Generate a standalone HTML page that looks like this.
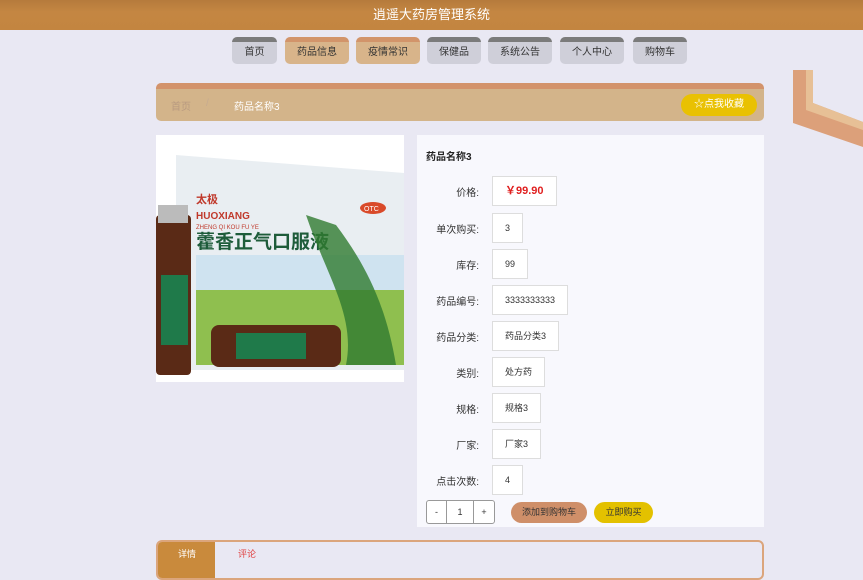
<!DOCTYPE html>
<html><head><meta charset="utf-8"><style>
*{margin:0;padding:0;box-sizing:border-box}
body{width:863px;height:564px;overflow:hidden;background:#e9e8f3;font-family:"Liberation Sans","Noto Sans CJK SC",sans-serif;position:relative;font-size:10px;color:#333}
.hdr{position:absolute;left:0;top:0;width:863px;height:30px;background:linear-gradient(#b57a3c,#c48642 40%,#c38540);color:#fff;text-align:center;line-height:30px;font-size:13px}
.nav{position:absolute;top:37px;height:27px;border-radius:5px;background:#cfcfd9;border-top:5px solid #7b7b7b;text-align:center;line-height:22px;font-size:10px;color:#333}
.nav.a{background:#d8b48a;border-top-color:#d2946a}
.bc{position:absolute;left:156px;top:83px;width:608px;height:38px;background:#d3b48a;border-top:6px solid #d3936b;border-radius:5px}
.bc span{position:absolute;top:9px;font-size:10px}
.fav{position:absolute;left:681px;top:94px;width:76px;height:22px;border-radius:11px;background:#e9c102;color:#fff;font-size:10px;text-align:center;line-height:22px}
.img{position:absolute;left:156px;top:135px;width:248px;height:247px;background:#fff;overflow:hidden}
.det{position:absolute;left:417px;top:135px;width:347px;height:392px;background:#f8f8fd}
.lbl{position:absolute;width:62px;text-align:right;left:417px;font-size:10px;color:#333}
.box{position:absolute;left:492px;height:30px;border:1px solid #ddd;background:#fff;font-size:9px;line-height:28px;padding:0 12px;color:#333}
.btn{position:absolute;top:502px;height:21px;border-radius:11px;text-align:center;line-height:21px;font-size:9px;color:#333}
.tabs{position:absolute;left:156px;top:540px;width:608px;height:40px;border:2px solid #dba57c;border-radius:6px;background:#e9e8f3;overflow:hidden}
</style></head><body>
<div class="hdr">逍遥大药房管理系统</div>
<div class="nav" style="left:232px;width:45px">首页</div>
<div class="nav a" style="left:285px;width:64px">药品信息</div>
<div class="nav a" style="left:356px;width:64px">疫情常识</div>
<div class="nav" style="left:427px;width:54px">保健品</div>
<div class="nav" style="left:488px;width:64px">系统公告</div>
<div class="nav" style="left:560px;width:64px">个人中心</div>
<div class="nav" style="left:633px;width:54px">购物车</div>
<svg style="position:absolute;left:780px;top:60px" width="83" height="100"><polygon points="13,10 33,10 33,43 83,62 83,87 13,63" fill="#dca07a"/><polygon points="26,10 33,10 33,43 83,62 83,70 26,50" fill="#e7c096"/></svg>
<div class="bc"><span style="left:15px;color:#b89a80">首页</span><span style="left:50px;color:#c6ab90">/</span><span style="left:78px;color:#fff">药品名称3</span></div>
<div class="fav">☆点我收藏</div>
<div class="img"><svg width="248" height="247">
<rect width="248" height="247" fill="#fff"/>
<polygon points="20,20 248,38 248,235 20,235" fill="#e9eef2"/>
<text x="40" y="68" font-size="11" fill="#c0392b" font-weight="bold">太极</text>
<text x="40" y="84" font-size="10" fill="#c0392b" font-weight="bold">HUOXIANG</text>
<text x="40" y="94" font-size="6" fill="#c0392b">ZHENG QI KOU FU YE</text>
<ellipse cx="217" cy="73" rx="13" ry="6" fill="#d94a2a"/><text x="208" y="76" font-size="7" fill="#fff">OTC</text>
<text x="40" y="113" font-size="19" fill="#1e5c3a" font-weight="bold">藿香正气口服液</text>
<rect x="40" y="120" width="208" height="110" fill="#8fbf4f"/><rect x="40" y="120" width="208" height="35" fill="#cfe3f0"/>
<path d="M150,80 C170,140 200,180 190,230 L240,230 C230,170 210,130 180,90Z" fill="#2f7a2f" opacity=".8"/>
<rect x="0" y="80" width="35" height="160" rx="4" fill="#5a2a16"/><rect x="5" y="140" width="27" height="70" fill="#1f7a4a"/>
<rect x="2" y="70" width="30" height="18" fill="#bbb"/>
<rect x="55" y="190" width="130" height="42" rx="8" fill="#5a2a16"/><rect x="80" y="198" width="70" height="26" fill="#1f7a4a"/>
</svg></div>
<div class="det"></div>
<div style="position:absolute;left:426px;top:148px;font-size:10px;font-weight:bold;color:#222">药品名称3</div>
<div class="lbl" style="top:184px">价格:</div><div class="box" style="top:176px;color:#e02020;font-size:11px;font-weight:bold">￥99.90</div>
<div class="lbl" style="top:221px">单次购买:</div><div class="box" style="top:213px">3</div>
<div class="lbl" style="top:257px">库存:</div><div class="box" style="top:249px">99</div>
<div class="lbl" style="top:293px">药品编号:</div><div class="box" style="top:285px">3333333333</div>
<div class="lbl" style="top:329px">药品分类:</div><div class="box" style="top:321px">药品分类3</div>
<div class="lbl" style="top:365px">类别:</div><div class="box" style="top:357px">处方药</div>
<div class="lbl" style="top:401px">规格:</div><div class="box" style="top:393px">规格3</div>
<div class="lbl" style="top:437px">厂家:</div><div class="box" style="top:429px">厂家3</div>
<div class="lbl" style="top:473px">点击次数:</div><div class="box" style="top:465px">4</div>
<div style="position:absolute;left:426px;top:500px;width:69px;height:24px;border:1px solid #999;border-radius:3px;background:#fff;display:flex;font-size:9px;line-height:22px;text-align:center">
<div style="width:20px;border-right:1px solid #999">-</div><div style="width:27px;border-right:1px solid #999">1</div><div style="flex:1">+</div></div>
<div class="btn" style="left:511px;width:76px;background:#cf8f69">添加到购物车</div>
<div class="btn" style="left:594px;width:59px;background:#e3c100">立即购买</div>
<div class="tabs"><div style="position:absolute;left:0;top:0;width:57px;height:40px;background:#c98a3c;color:#fff;text-align:left;padding:5px 0 0 20px;font-size:9px">详情</div><div style="position:absolute;left:80px;top:5px;color:#e04040;font-size:9px">评论</div></div>
</body></html>
